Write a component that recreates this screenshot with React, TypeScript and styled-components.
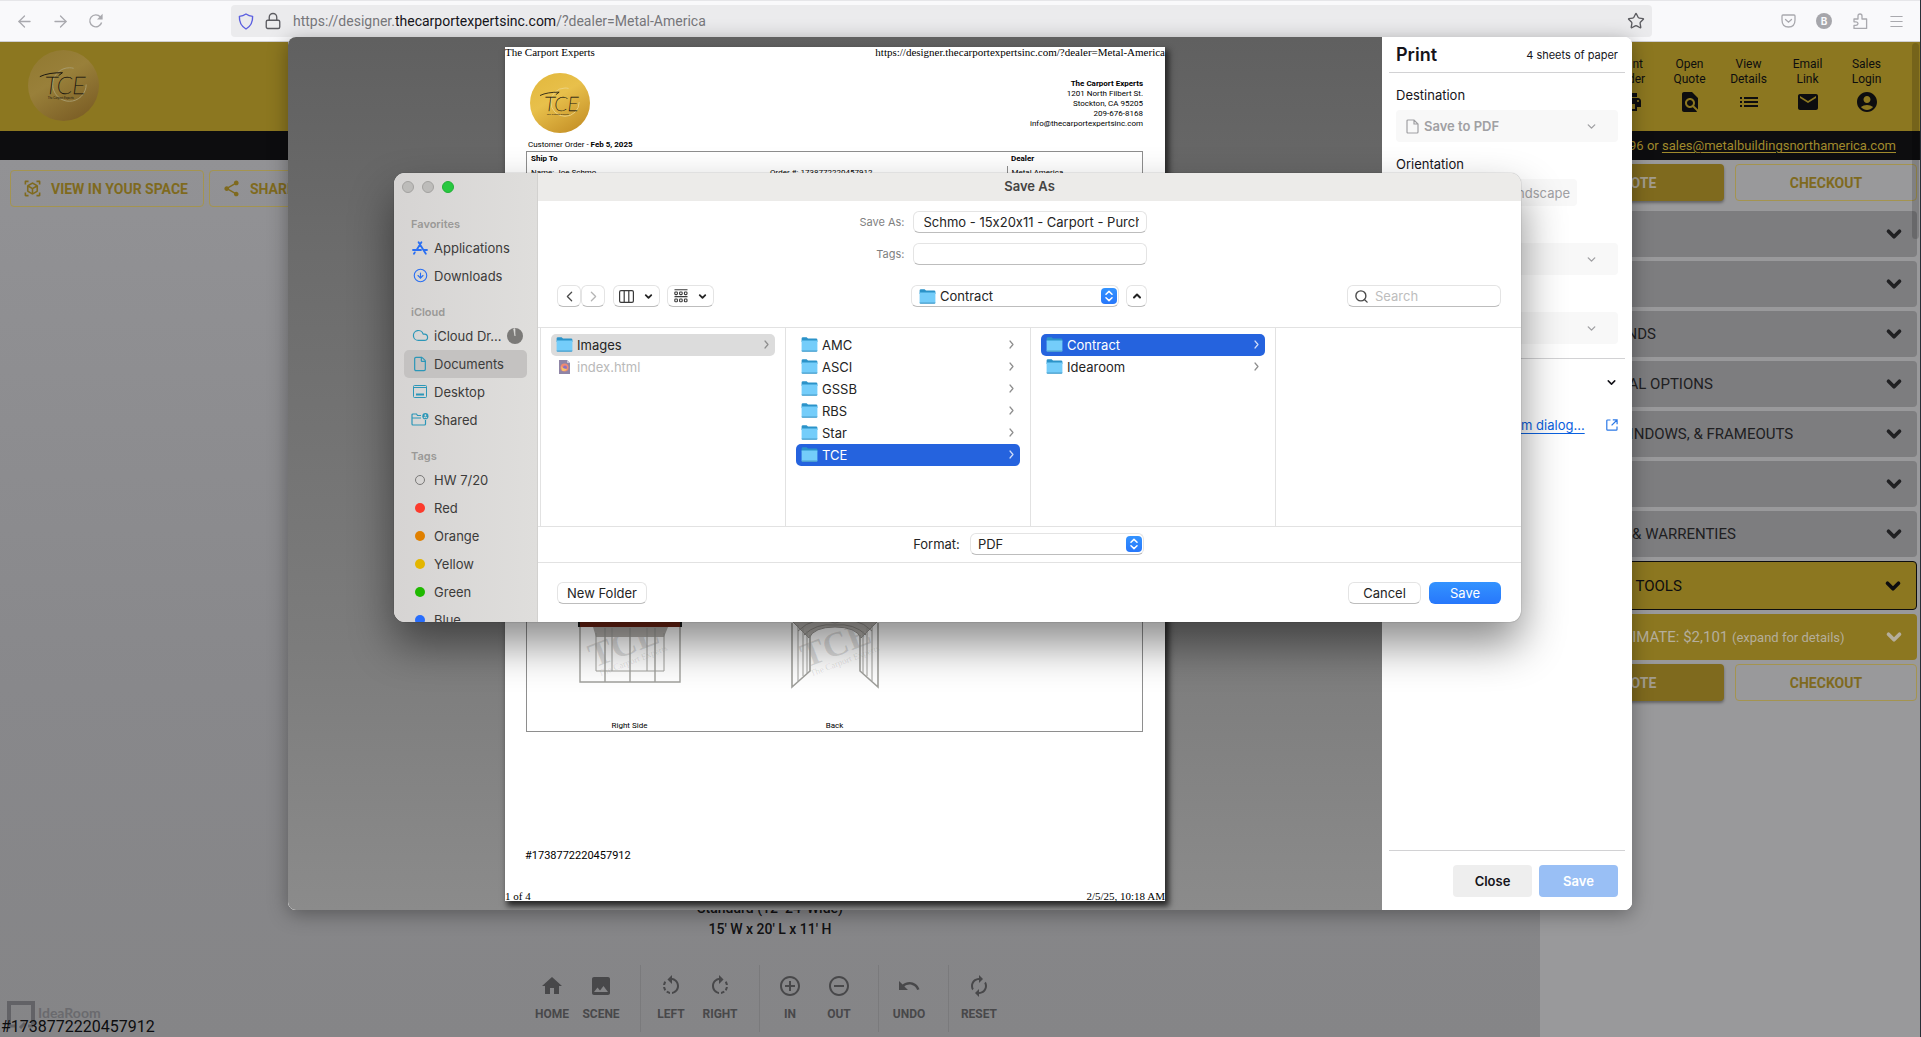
import React from "react";
import styled, { createGlobalStyle, css } from "styled-components";
import {
  MdAccountCircle,
  MdAutorenew,
  MdControlPoint,
  MdEmail,
  MdFindInPage,
  MdHome,
  MdImage,
  MdList,
  MdPrint,
  MdRemoveCircleOutline,
  MdRotateLeft,
  MdRotateRight,
  MdShare,
  MdUndo,
  MdViewInAr,
} from "react-icons/md";
import {
  ArrowLeft,
  ArrowRight,
  ChevronDown,
  ChevronLeft,
  ChevronRight,
  ChevronUp,
  CircleArrowDown,
  Cloud,
  File as FileIcon,
  Lock,
  Menu,
  Search,
  Star,
} from "lucide-react";

const sans = `Inter, "Liberation Sans", sans-serif`;
const roboto = `Roboto, "Liberation Sans", sans-serif`;
const serif = `"Liberation Serif", "Times New Roman", serif`;

const Global = createGlobalStyle`
  *, *::before, *::after { box-sizing: border-box; }
  body { margin: 0; overflow: hidden; background: #99999b; }
  button, input, select { font: inherit; color: inherit; margin: 0; }
  button { cursor: pointer; }
  ul { list-style: none; margin: 0; padding: 0; }
  h1, h2, h3, p { margin: 0; font: inherit; }
  svg { display: block; flex: none; }
`;

/* ---------- Browser chrome ---------- */

const Screen = styled.div`
  position: relative;
  height: 100vh;
  display: flex;
  flex-direction: column;
  overflow: hidden;
  font-family: ${roboto};
  border-right: 1px solid #2a3038;
`;

const BrowserBar = styled.div`
  display: flex;
  align-items: center;
  flex: none;
  height: 42px;
  padding-left: 14px;
  background: #f9f9fb;
  border-top: 1px solid #e6e6e9;
  border-bottom: 1px solid #cfcfd2;
  color: #a9a9ae;
`;

const NavButtons = styled.div`
  display: flex;
  gap: 16px;
  width: 217px;
`;

const ChromeButton = styled.button`
  display: grid;
  place-items: center;
  width: 20px;
  height: 20px;
  padding: 0;
  border: 0;
  background: none;
`;

const AddressBar = styled.div`
  display: flex;
  align-items: center;
  flex: 1;
  height: 32px;
  padding: 0 7px;
  gap: 10px;
  border-radius: 4px;
  background: #ebebed;
  color: #5c5c61;
`;

const Address = styled.div`
  flex: 1;
  margin-left: 1px;
  font: 400 14px/20px ${roboto};
  color: #77777b;
  b {
    font-weight: 400;
    color: #15141a;
  }
`;

const Extensions = styled.div`
  display: flex;
  gap: 16px;
  padding: 0 14px 0 126px;
`;

const ProfileBadge = styled.span`
  display: grid;
  place-items: center;
  width: 16px;
  height: 16px;
  border-radius: 50%;
  background: #a6a6ab;
  color: #f9f9fb;
  font: 700 10px/16px ${sans};
`;

/* ---------- Dimmed page ---------- */

const SiteHeader = styled.header`
  display: flex;
  align-items: flex-start;
  justify-content: space-between;
  flex: none;
  height: 89px;
  padding: 8px 24px 0 28px;
  background: #8c7720;
  color: #0d0d0f;
`;

const HeaderLinks = styled.nav`
  display: flex;
  padding-top: 7px;
`;

const HeaderLink = styled.button`
  display: flex;
  flex-direction: column;
  align-items: center;
  gap: 3px;
  width: 59px;
  padding: 0;
  border: 0;
  background: none;
  font: 400 12px/15px ${roboto};
`;

const ContactBar = styled.div`
  flex: none;
  height: 29px;
  padding-right: 24px;
  background: #0d0d0f;
  color: #a08a2c;
  text-align: right;
  font: 400 13px/29px ${roboto};
  a {
    color: inherit;
    text-underline-offset: 2px;
  }
`;

const Workspace = styled.div`
  display: flex;
  flex: 1;
  min-height: 0;
`;

const Canvas = styled.main`
  position: relative;
  display: flex;
  flex: 1;
  flex-direction: column;
  justify-content: space-between;
  padding: 10px 0 5px;
  background: linear-gradient(#929295, #88888b 60%, #858587);
`;

const CanvasActions = styled.div`
  display: flex;
  gap: 5px;
  padding-left: 10px;
`;

const OutlineButton = styled.button<{ $grow?: boolean }>`
  display: flex;
  align-items: center;
  justify-content: center;
  gap: 9px;
  height: 37px;
  padding: 0 15px 0 12px;
  border: 1px solid #a49450;
  border-radius: 4px;
  background: none;
  color: #7f6a1e;
  font: 700 14px/20px ${roboto};
  ${(p) => p.$grow && css`flex: 1; padding: 0;`}
`;

const QuoteButton = styled(OutlineButton)`
  border: 0;
  background: #7f6a1e;
  color: #a29c8e;
  box-shadow: 0 2px 3px rgba(0, 0, 0, 0.35);
`;

const CanvasFooter = styled.div`
  display: flex;
  flex-direction: column;
  align-items: center;
`;

const Caption = styled.p`
  padding-bottom: 25px;
  color: #111113;
  text-align: center;
  font: 500 14px/21px ${roboto};
`;

const ToolGroups = styled.div`
  display: flex;
`;

const ToolGroup = styled.div`
  display: flex;
  padding: 0 14px 0 6px;
  border-right: 1px solid #7a7a7c;
  &:last-child {
    border-color: transparent;
  }
`;

const Tool = styled.button`
  display: flex;
  flex-direction: column;
  align-items: center;
  gap: 8px;
  width: 49px;
  padding: 9px 0 10px;
  border: 0;
  background: none;
  color: #48484a;
  font: 700 12px/16px ${roboto};
`;

const Brand = styled.div`
  position: absolute;
  left: 7px;
  bottom: 8px;
  display: flex;
  gap: 3px;
  color: #6a6a6e;
  font: 700 14px/24px Lato, sans-serif;
`;

const QuoteNumber = styled.p`
  position: absolute;
  left: 1px;
  bottom: 0;
  color: #0d0d0f;
  font: 400 16px/20px ${roboto};
`;

const Options = styled.aside`
  display: flex;
  flex: none;
  flex-direction: column;
  gap: 4px;
  width: 380px;
  padding: 4px 3px 0 4px;
  background: #99999b;
`;

const ButtonPair = styled.div<{ $spaced?: boolean }>`
  display: flex;
  gap: 11px;
  padding-bottom: ${(p) => (p.$spaced ? 6 : 0)}px;
`;

const Accordion = styled.button<{ $tone?: "active" | "total" }>`
  display: flex;
  align-items: center;
  gap: 6px;
  height: 46px;
  padding: 0 12px 0 17px;
  border: 0;
  border-radius: 4px;
  background: #7d7d7f;
  color: #202022;
  text-align: left;
  font: 400 15px/20px ${roboto};
  span {
    flex: 1;
  }
  small {
    font-size: 13px;
  }
  ${(p) =>
    p.$tone === "active" &&
    css`
      height: 49px;
      border: 1px solid #0d0d0f;
      background: #8c7720;
      color: #0d0d0f;
    `}
  ${(p) =>
    p.$tone === "total" &&
    css`
      background: #8c7720;
      color: #b5ae9b;
    `}
`;

const ScrollThumb = styled.div`
  position: absolute;
  top: 43px;
  right: 1px;
  width: 7px;
  height: 196px;
  border-radius: 4px;
  background: rgba(0, 0, 0, 0.16);
`;

/* ---------- Print dialog ---------- */

const PrintDialog = styled.section`
  position: absolute;
  top: 37px;
  left: 15%;
  width: 70%;
  display: flex;
  overflow: hidden;
  border-radius: 8px;
  background: #fff;
`;

const PrintShade = styled(PrintDialog).attrs({ as: "div" })`
  height: 873px;
  box-shadow: 0 4px 20px rgba(0, 0, 0, 0.35);
`;

const Preview = styled.div`
  display: flex;
  flex: 1;
  justify-content: center;
  padding: 10px 0 9px;
  background: linear-gradient(#606060, #6c6c6c 25%, #7c7c7c 70%, #8b8b8b);
`;

const Paper = styled.article`
  display: flex;
  flex-direction: column;
  width: 660px;
  min-height: 854px;
  background: #fff;
  color: #000;
  box-shadow: 3px 4px 6px 1px #262626;
  font: 400 8px/10px ${roboto};
`;

const PaperEdge = styled.div`
  display: flex;
  justify-content: space-between;
  font: 400 11px/10px ${serif};
`;

const Letterhead = styled.div`
  display: flex;
  justify-content: space-between;
  padding: 16px 22px 0 25px;
`;

const Company = styled.address`
  padding-top: 6px;
  text-align: right;
  font-style: normal;
`;

const OrderLine = styled.p`
  padding: 7px 23px 1px;
`;

const OrderBox = styled.div`
  display: flex;
  flex-direction: column;
  justify-content: space-between;
  height: 581px;
  margin: 0 22px 0 21px;
  border: 1px solid #8e8e8e;
`;

const OrderTable = styled.table`
  width: 100%;
  border-collapse: collapse;
  table-layout: fixed;
  text-align: left;
  th,
  td {
    padding: 2px 4px;
    font-weight: 400;
  }
  th {
    font-weight: 700;
  }
  td + td + td {
    border-left: 1px solid #8e8e8e;
  }
`;

const Views = styled.div`
  display: flex;
`;

const View = styled.figure`
  display: flex;
  flex-direction: column;
  align-items: center;
  gap: 30px;
  width: 205px;
  margin: 0;
`;

const PaperNumber = styled.p`
  flex: 1;
  padding: 117px 20px 0;
  font: 400 11px/14px ${roboto};
`;

const Settings = styled.form`
  display: flex;
  flex: none;
  flex-direction: column;
  width: 250px;
  padding: 0 7px;
  background: #fff;
  color: #15141a;
  font: 400 13px/18px ${sans};
`;

const SettingsHead = styled.div`
  display: flex;
  align-items: center;
  justify-content: space-between;
  height: 36px;
  padding: 0 7px;
  border-bottom: 1px solid #d2d2d4;
  h2 {
    font: 600 18px/24px ${sans};
  }
  span {
    font-size: 11px;
  }
`;

const Section = styled.div`
  display: flex;
  flex-direction: column;
  gap: 6px;
  padding: 13px 7px 0;
`;

const PickBox = styled.div`
  display: flex;
  align-items: center;
  gap: 5px;
  height: 32px;
  padding: 0 20px 0 10px;
  border-radius: 4px;
  background: #f8f8f8;
  color: #a0a0a3;
`;

const BareSelect = styled.select`
  flex: 1;
  min-width: 0;
  padding: 0;
  border: 0;
  outline: 0;
  appearance: none;
  background: none;
  opacity: 1;
`;

const BoldSelect = styled(BareSelect)`
  font-weight: 600;
`;

const RadioRow = styled.div`
  display: flex;
  width: 181px;
  height: 27px;
`;

const Orientation = styled.label`
  display: grid;
  place-items: center end;
  flex: 1;
  padding-right: 7px;
  border-radius: 4px;
  background: #f8f8f8;
  color: #a0a0a3;
  input {
    position: absolute;
    appearance: none;
    width: 0;
    height: 0;
    margin: 0;
  }
`;

const MoreRow = styled.button`
  display: flex;
  align-items: center;
  justify-content: space-between;
  height: 48px;
  margin-top: 14px;
  padding: 0 7px;
  border: 0;
  border-top: 1px solid #d2d2d4;
  background: none;
`;

const SystemRow = styled.div`
  display: flex;
  align-items: center;
  justify-content: space-between;
  flex: none;
  padding: 10px 7px;
  color: #0a61e0;
  a {
    color: inherit;
    text-underline-offset: 3px;
  }
`;

const SettingsFoot = styled.div`
  display: flex;
  justify-content: flex-end;
  gap: 7px;
  margin-top: auto;
  padding: 14px 7px 13px;
  border-top: 1px solid #d2d2d4;
`;

const PrintButton = styled.button<{ $primary?: boolean }>`
  width: 79px;
  height: 32px;
  border: 0;
  border-radius: 4px;
  background: ${(p) => (p.$primary ? "#99bff5" : "#eeeeee")};
  color: ${(p) => (p.$primary ? "#fff" : "#15141a")};
  font: 600 13px/18px ${sans};
`;

/* ---------- Save dialog ---------- */

const SaveDialog = styled.section`
  position: absolute;
  top: 173px;
  left: calc(50% - 566px);
  display: flex;
  width: 1127px;
  height: 449px;
  overflow: hidden;
  border-radius: 11px;
  background: #fff;
  color: #242424;
  font: 400 13px/16px ${sans};
  box-shadow: 0 0 1px rgba(0, 0, 0, 0.6), 0 22px 44px rgba(0, 0, 0, 0.46);
`;

const Sidebar = styled.nav`
  flex: none;
  width: 144px;
  padding: 8px 10px 0;
  border-right: 1px solid #d2d1cf;
  background: linear-gradient(90deg, #d6d4d3, #dfdedc);
  color: #3c3b3a;
`;

const Lights = styled.div`
  display: flex;
  gap: 8px;
  height: 21px;
  margin-left: -2px;
`;

const Light = styled.button<{ $on?: boolean }>`
  width: 12px;
  height: 12px;
  padding: 0;
  border: 1px solid ${(p) => (p.$on ? "#20b035" : "#a3a2a0")};
  border-radius: 50%;
  background: ${(p) => (p.$on ? "#28c840" : "#bdbcba")};
`;

const GroupTitle = styled.h3`
  height: 32px;
  padding: 14px 7px 0;
  color: #9a9997;
  font: 600 11px/17px ${sans};
`;

const Place = styled.button<{ $active?: boolean }>`
  display: flex;
  align-items: center;
  gap: 5px;
  width: 100%;
  height: 28px;
  padding: 0 7px 1px;
  border: 0;
  border-radius: 5px;
  background: ${(p) => (p.$active ? "#c4c2c1" : "none")};
  text-align: left;
  white-space: nowrap;
`;

const PlaceIcon = styled.span`
  display: grid;
  place-items: center;
  flex: none;
  width: 18px;
`;

const PlaceName = styled.span`
  flex: 1;
`;

const Dot = styled.span<{ $color?: string }>`
  width: 10px;
  height: 10px;
  border-radius: 50%;
  background: ${(p) => p.$color ?? "none"};
  border: ${(p) => (p.$color ? "0" : "1px solid #7a7978")};
`;

const Pane = styled.div`
  display: flex;
  flex: 1;
  flex-direction: column;
  min-width: 0;
`;

const TitleBar = styled.h2`
  height: 28px;
  background: #ecebe9;
  color: #454443;
  text-align: center;
  font: 600 13px/27px ${sans};
`;

const NameForm = styled.form`
  display: grid;
  grid-template-columns: 1fr 234px 1fr;
  gap: 10px 8px;
  align-items: center;
  padding-top: 10px;
  label {
    color: #7f7f7f;
    text-align: right;
    font-size: 11px;
  }
`;

const control = css`
  height: 22px;
  border: 1px solid #e4e4e4;
  border-bottom-color: #bdbdbd;
  border-radius: 6px;
  background: #fff;
`;

const Field = styled.input`
  ${control}
  grid-column: 2;
  min-width: 0;
  padding: 0 7px 0 10px;
  outline: 0;
  font-feature-settings: "calt" 0;
`;

const Toolbar = styled.div`
  display: grid;
  grid-template-columns: 1fr auto 1fr;
  padding: 20px 20px 20px 19px;
`;

const ToolbarGroup = styled.div<{ $end?: boolean }>`
  display: flex;
  gap: 7px;
  justify-content: ${(p) => (p.$end ? "flex-end" : "flex-start")};
`;

const NavPair = styled.div`
  display: flex;
  padding-right: 1px;
`;

const MacButton = styled.button<{ $width?: number; $primary?: boolean }>`
  ${control}
  display: flex;
  align-items: center;
  justify-content: center;
  gap: 9px;
  width: ${(p) => p.$width ?? 24}px;
  padding: 0;
  ${(p) =>
    p.$primary &&
    css`
      border: 0;
      background: linear-gradient(#3393ff, #2777fb);
      color: #fff;
    `}
`;

const MacPick = styled.div<{ $width: number }>`
  ${control}
  display: flex;
  align-items: center;
  gap: 4px;
  width: ${(p) => p.$width}px;
  padding: 0 1px 0 7px;
`;

const Stepper = styled.span`
  display: grid;
  place-items: center;
  width: 16px;
  height: 16px;
  border-radius: 4px;
  background: linear-gradient(#3393ff, #2777fb);
`;

const SearchBox = styled.label`
  ${control}
  display: flex;
  align-items: center;
  gap: 6px;
  width: 154px;
  padding: 0 6px;
  input {
    flex: 1;
    min-width: 0;
    padding: 0;
    border: 0;
    outline: 0;
    background: none;
  }
  input::placeholder {
    color: #bdbdbd;
  }
`;

const ColumnsWrap = styled.div`
  border-top: 1px solid #e2e2e2;
  border-bottom: 1px solid #e2e2e2;
`;

const Columns = styled.div`
  display: flex;
  height: 198px;
  margin-left: 2px;
  border-left: 1px solid #e2e2e2;
`;

const Column = styled.ul`
  flex: none;
  width: 245px;
  padding: 6px 10px 0;
  border-right: 1px solid #e2e2e2;
`;

const Entry = styled.button<{ $state?: "selected" | "path" | "disabled" }>`
  display: flex;
  align-items: center;
  gap: 4px;
  width: 100%;
  height: 22px;
  padding: 0 3px 1px 5px;
  border: 0;
  border-radius: 5px;
  background: none;
  text-align: left;
  span {
    flex: 1;
  }
  ${(p) => p.$state === "selected" && css`background: #2563de; color: #fff;`}
  ${(p) => p.$state === "path" && css`background: #dcdcdc;`}
  ${(p) => p.$state === "disabled" && css`color: #b9b9b9;`}
`;

const FormatRow = styled.div`
  display: flex;
  align-items: center;
  justify-content: center;
  gap: 10px;
  height: 35px;
  padding: 0 2px 2px 0;
`;

const SaveFoot = styled.div`
  display: flex;
  align-items: center;
  gap: 8px;
  flex: 1;
  padding: 0 20px 0 19px;
  border-top: 1px solid #e2e2e2;
`;

const Spacer = styled.span`
  flex: 1;
`;

/* ---------- Drawings ---------- */

const Logo = ({ size, dim }: { size: number; dim?: boolean }) => {
  const id = dim ? "gold-dim" : "gold";
  return (
    <svg width={size} height={size} viewBox="0 0 72 72" aria-label="TCE The Carport Experts">
      <defs>
        <linearGradient id={id} x1="0.2" y1="0" x2="0.8" y2="1">
          <stop offset="0" stopColor={dim ? "#927a32" : "#e3b93f"} />
          <stop offset="0.4" stopColor={dim ? "#99803a" : "#e8c04b"} />
          <stop offset="1" stopColor={dim ? "#7a5c24" : "#c48f26"} />
        </linearGradient>
      </defs>
      <circle cx="36" cy="36" r="36" fill={`url(#${id})`} />
      <circle cx="42" cy="35" r="17" fill="none" stroke={dim ? "#a89a6c" : "#ecd58a"} strokeWidth="1" strokeDasharray="84 23" />
      <path d="M12 27 C18 24 26 23 35 23 L31 26" fill="none" stroke="#1a1710" strokeWidth="1" />
      <text x="17" y="45" fontFamily="Lato" fontStyle="italic" fontWeight="100" fontSize="25" fill="#1a1710" stroke="#1a1710" strokeWidth="0.4">
        TCE
      </text>
      <text x="20" y="50" fontFamily="Lato" fontSize="3" fill="#1a1710">
        The Carport Experts
      </text>
    </svg>
  );
};

const Folder = () => (
  <svg width="17" height="17" viewBox="0 0 17 17">
    <path d="M0.6 2.6 Q0.6 1.2 2 1.2 H5.6 L7 2.4 H15 Q16.4 2.4 16.4 3.8 V6 H0.6Z" fill="#2b93c9" />
    <path d="M0.6 4.4 H16.4 V14.4 Q16.4 15.6 15.2 15.6 H1.8 Q0.6 15.6 0.6 14.4Z" fill="#74cdfa" />
    <path d="M0.6 14.4 H16.4 Q16.4 15.8 15.2 15.8 H1.8 Q0.6 15.8 0.6 14.4Z" fill="#4a9fcb" />
  </svg>
);

const StepArrows = () => (
  <svg width="8" height="12" viewBox="0 0 8 12" fill="none" stroke="#fff" strokeWidth="1.5" strokeLinecap="round" strokeLinejoin="round">
    <path d="M1 4.2 L4 1.4 L7 4.2 M1 7.8 L4 10.6 L7 7.8" />
  </svg>
);

const Disclosure = ({ color }: { color: string }) => (
  <svg width="11" height="11" viewBox="0 0 11 11" fill="none" stroke={color} strokeWidth="1.2" strokeLinecap="round" strokeLinejoin="round">
    <path d="M4 2 L7 5.5 L4 9" />
  </svg>
);

const AppsIcon = () => (
  <svg width="16" height="14" viewBox="0 0 16 14" fill="none" stroke="#2a6ff2" strokeWidth="1.8" strokeLinecap="round">
    <path d="M9.4 1.2 L4.6 9 M6.6 1.2 L13.8 12.8 M1 9 H9 M12 9 H15 M2.8 11.4 L2 12.8" />
  </svg>
);

const DesktopIcon = () => (
  <svg width="14" height="13" viewBox="0 0 14 13" fill="none" stroke="#2c97b8">
    <rect x="0.5" y="0.5" width="13" height="12" rx="1" />
    <path d="M1 2.5 H13" />
    <path d="M3 9.5 H11" strokeWidth="2" />
  </svg>
);

const SharedIcon = () => (
  <svg width="18" height="13" viewBox="0 0 18 13" fill="none" stroke="#2c97b8" strokeWidth="1.2">
    <path d="M10 2.5 H6.5 L5.5 1 H2 Q1 1 1 2 V11 Q1 12 2 12 H13.5 Q14.5 12 14.5 11 V7 M1 5 H10" />
    <circle cx="14.4" cy="3.2" r="3.1" fill="#2c97b8" stroke="none" />
    <circle cx="14.4" cy="2.2" r="0.9" fill="#d9d8d6" stroke="none" />
    <path d="M13 4.8 Q14.4 3.2 15.8 4.8" stroke="#d9d8d6" />
  </svg>
);

const SyncPie = () => (
  <svg width="16" height="16" viewBox="0 0 16 16">
    <circle cx="8" cy="8" r="8" fill="#7b7a78" />
    <path d="M8 8 L6.6 1 L8 0.6Z" fill="#dcdbd9" stroke="#dcdbd9" strokeWidth="0.6" />
  </svg>
);

const ColumnsIcon = () => (
  <svg width="15" height="13" viewBox="0 0 15 13" fill="none" stroke="#3a3a3a" strokeWidth="1.2">
    <rect x="0.6" y="0.6" width="13.8" height="11.8" rx="1.4" />
    <path d="M5.2 1 V12 M9.8 1 V12" />
  </svg>
);

const GroupIcon = () => (
  <svg width="14" height="14" viewBox="0 0 14 14" fill="none" stroke="#3a3a3a" strokeWidth="1.1">
    <path d="M0.5 0.8 H13.5 M0.5 7.6 H13.5" />
    {[0.8, 5.6, 10.4].map((x) => (
      <React.Fragment key={x}>
        <rect x={x} y="3" width="2.6" height="2.6" rx="0.8" />
        <rect x={x} y="10" width="2.6" height="2.8" rx="0.8" />
      </React.Fragment>
    ))}
  </svg>
);

const HtmlIcon = () => (
  <svg width="17" height="16" viewBox="0 0 17 16">
    <path d="M3 1 H11 L14 4 V15 H3Z" fill="#8f85a6" />
    <path d="M11 1 L14 4 H11Z" fill="#c9c3d6" />
    <circle cx="8.5" cy="8.6" r="4" fill="#f08a72" />
    <circle cx="9" cy="8.4" r="1.9" fill="#8b6fc4" />
    <path d="M5 7 Q7 10 11 10 Q9 13 6 11.4Z" fill="#f7c469" />
  </svg>
);

const PageIcon = () => (
  <svg width="13" height="15" viewBox="0 0 13 15" fill="none" stroke="#a0a0a3" strokeWidth="1.2">
    <path d="M1 2 Q1 1 2 1 H8 L12 5 V13 Q12 14 11 14 H2 Q1 14 1 13Z M8 1 V5 H12" />
  </svg>
);

const ExternalIcon = () => (
  <svg width="12" height="12" viewBox="0 0 12 12" fill="none" stroke="#2b78e6" strokeWidth="1.2">
    <path d="M4.5 1 H1.6 Q0.8 1 0.8 1.8 V10.4 Q0.8 11.2 1.6 11.2 H10.2 Q11 11.2 11 10.4 V7.5 M6.8 0.9 H11.1 V5.2 M11 1 L5.6 6.4" />
  </svg>
);

const ReloadIcon = () => (
  <svg width="16" height="16" viewBox="0 0 16 16" fill="none" stroke="#a9a9ae" strokeWidth="1.4">
    <path d="M13.6 9.5 A6 6 0 1 1 12.4 4" />
    <path d="M14.6 0.8 V6.4 H9Z" fill="#a9a9ae" stroke="none" />
  </svg>
);

const ShieldIcon = () => (
  <svg width="16" height="17" viewBox="0 0 16 17" fill="none" stroke="#5b5fe0" strokeWidth="1.4" strokeLinejoin="round">
    <path d="M8 1 Q11 3 14.6 3.4 Q15 12 8 16 Q1 12 1.4 3.4 Q5 3 8 1Z" />
  </svg>
);

const PocketIcon = () => (
  <svg width="15" height="14" viewBox="0 0 15 14" fill="none" stroke="#a9a9ae" strokeWidth="1.3" strokeLinecap="round">
    <path d="M2 1 H13 Q14 1 14 2 V6 Q14 13 7.5 13 Q1 13 1 6 V2 Q1 1 2 1Z M4.5 5.5 L7.5 8.2 L10.5 5.5" />
  </svg>
);

const PuzzleIcon = () => (
  <svg width="15" height="17" viewBox="0 0 15 17" fill="none" stroke="#a9a9ae" strokeWidth="1.3" strokeLinejoin="round">
    <path d="M1 6 H5 V3 Q5 1 7 1 Q9 1 9 3 V6 H13.6 V15.4 H1 V12.4 H3 Q5 12.2 5 10.6 Q5 9 3 8.8 H1Z" />
  </svg>
);

const Watermark = () => (
  <g transform="translate(16 47) rotate(-21)" fill="rgba(0, 0, 0, 0.12)" stroke="none" fontFamily="Liberation Serif">
    <text x="0" y="0" fontSize="35" fontWeight="700">TCE</text>
    <text x="2" y="10" fontSize="9">The Carport Experts</text>
  </g>
);

const SideView = () => (
  <svg width="104" height="70" viewBox="0 0 104 70" fill="none" stroke="#a0a09c" overflow="visible">
    <Watermark />
    <path d="M15 6 H90 L86 16 H18Z" fill="#b5b2ae" stroke="none" />
    <path d="M2 6 V61 H102 V6 M27 7 V61 M52 7 V61 M77 7 V61" strokeWidth="1.4" />
    <path d="M18 12 V50 H86 V12 M34 7 V50 M69 7 V50" />
    <rect x="1" y="0" width="102" height="6" fill="#6e2413" stroke="none" />
    <path d="M1 0 V6 M103 0 V6" stroke="#1a1a1a" strokeWidth="2" />
  </svg>
);

const BackView = () => (
  <svg width="90" height="70" viewBox="0 0 90 70" fill="none" stroke="#a0a09c" overflow="visible">
    <Watermark />
    <path d="M2 0 H88 L71 17 Q66 6 45 6 Q24 6 19 17Z" fill="#b5b2ae" stroke="#96938f" />
    <path d="M8 10 Q24 -6 45 2 Q66 -6 82 10 M14 14 Q26 2 45 4 Q64 2 76 14" stroke="#8e8b87" />
    <path d="M2 2 V66 L20 50 V14 M88 2 V66 L70 50 V14" strokeWidth="1.6" />
    <path d="M8 4 V60 M13 7 V55 M17 10 V52 M82 4 V60 M77 7 V55 M73 10 V52" />
  </svg>
);

/* ---------- Data ---------- */

const headerLinks = [
  { top: "Print", bottom: "Order", Icon: MdPrint },
  { top: "Open", bottom: "Quote", Icon: MdFindInPage },
  { top: "View", bottom: "Details", Icon: MdList },
  { top: "Email", bottom: "Link", Icon: MdEmail },
  { top: "Sales", bottom: "Login", Icon: MdAccountCircle },
];

const toolGroups = [
  [{ name: "HOME", Icon: MdHome }, { name: "SCENE", Icon: MdImage }],
  [{ name: "LEFT", Icon: MdRotateLeft }, { name: "RIGHT", Icon: MdRotateRight }],
  [{ name: "IN", Icon: MdControlPoint }, { name: "OUT", Icon: MdRemoveCircleOutline }],
  [{ name: "UNDO", Icon: MdUndo }],
  [{ name: "RESET", Icon: MdAutorenew }],
];

const optionRows = [
  "STYLE",
  "SIZE",
  "SIDES & ENDS",
  "ADDITIONAL OPTIONS",
  "DOORS, WINDOWS, & FRAMEOUTS",
  "COLORS",
  "SERVICES & WARRENTIES",
];

const teal = "#2c97b8";

const places = [
  {
    title: "Favorites",
    items: [
      { name: "Applications", icon: <AppsIcon /> },
      { name: "Downloads", icon: <CircleArrowDown size={15} color="#2a6ff2" strokeWidth={1.8} /> },
    ],
  },
  {
    title: "iCloud",
    items: [
      { name: "iCloud Dr...", icon: <Cloud size={17} color={teal} strokeWidth={1.7} />, sync: true },
      { name: "Documents", icon: <FileIcon size={16} color={teal} strokeWidth={1.8} />, active: true },
      { name: "Desktop", icon: <DesktopIcon /> },
      { name: "Shared", icon: <SharedIcon /> },
    ],
  },
  {
    title: "Tags",
    items: [
      { name: "HW 7/20", icon: <Dot /> },
      { name: "Red", icon: <Dot $color="#fc3b2d" /> },
      { name: "Orange", icon: <Dot $color="#e08000" /> },
      { name: "Yellow", icon: <Dot $color="#e3b600" /> },
      { name: "Green", icon: <Dot $color="#1fb900" /> },
      { name: "Blue", icon: <Dot $color="#286dfb" /> },
    ],
  },
];

type EntryState = "selected" | "path" | "disabled";

const columns: { name: string; state?: EntryState }[][] = [
  [{ name: "Images", state: "path" }, { name: "index.html", state: "disabled" }],
  [{ name: "AMC" }, { name: "ASCI" }, { name: "GSSB" }, { name: "RBS" }, { name: "Star" }, { name: "TCE", state: "selected" }],
  [{ name: "Contract", state: "selected" }, { name: "Idearoom" }],
];

/* ---------- Views ---------- */

const Browser = () => (
  <BrowserBar>
    <NavButtons>
      <ChromeButton aria-label="Back"><ArrowLeft size={19} strokeWidth={1.6} /></ChromeButton>
      <ChromeButton aria-label="Forward"><ArrowRight size={19} strokeWidth={1.6} /></ChromeButton>
      <ChromeButton aria-label="Reload"><ReloadIcon /></ChromeButton>
    </NavButtons>
    <AddressBar>
      <ShieldIcon />
      <Lock size={18} strokeWidth={1.8} />
      <Address>
        https://designer.<b>thecarportexpertsinc.com</b>/?dealer=Metal-America
      </Address>
      <Star size={18} strokeWidth={1.8} />
    </AddressBar>
    <Extensions>
      <ChromeButton aria-label="Pocket"><PocketIcon /></ChromeButton>
      <ChromeButton aria-label="Profile"><ProfileBadge>B</ProfileBadge></ChromeButton>
      <ChromeButton aria-label="Extensions"><PuzzleIcon /></ChromeButton>
      <ChromeButton aria-label="Menu"><Menu size={17} strokeWidth={1.6} /></ChromeButton>
    </Extensions>
  </BrowserBar>
);

const QuoteButtons = ({ spaced }: { spaced?: boolean }) => (
  <ButtonPair $spaced={spaced}>
    <QuoteButton $grow>QUOTE</QuoteButton>
    <OutlineButton $grow>CHECKOUT</OutlineButton>
  </ButtonPair>
);

const DesignerPage = () => (
  <>
    <SiteHeader>
      <Logo size={71} dim />
      <HeaderLinks>
        {headerLinks.map(({ top, bottom, Icon }) => (
          <HeaderLink key={bottom}>
            <span>{top}<br />{bottom}</span>
            <Icon size={24} />
          </HeaderLink>
        ))}
      </HeaderLinks>
    </SiteHeader>
    <ContactBar>
      Questions? 209-676-8196 or <a href="#mail">sales@metalbuildingsnorthamerica.com</a>
    </ContactBar>
    <Workspace>
      <Canvas>
        <CanvasActions>
          <OutlineButton><MdViewInAr size={19} />VIEW IN YOUR SPACE</OutlineButton>
          <OutlineButton><MdShare size={19} />SHARE</OutlineButton>
        </CanvasActions>
        <CanvasFooter>
          <Caption>Standard (12'-24' Wide)<br />15' W x 20' L x 11' H</Caption>
          <ToolGroups>
            {toolGroups.map((group) => (
              <ToolGroup key={group[0].name}>
                {group.map(({ name, Icon }) => (
                  <Tool key={name}><Icon size={24} />{name}</Tool>
                ))}
              </ToolGroup>
            ))}
          </ToolGroups>
        </CanvasFooter>
        <Brand>
          <svg width="28" height="28" viewBox="0 0 28 28" fill="none" stroke="#626266" strokeWidth="4">
            <path d="M2 24 V2 H26 V24" />
            <path d="M2 25 H8 M13 27 L18 22 M21 25 H26" strokeWidth="3" />
          </svg>
          IdeaRoom
        </Brand>
        <QuoteNumber>#1738772220457912</QuoteNumber>
      </Canvas>
      <Options>
        <QuoteButtons spaced />
        {optionRows.map((name) => (
          <Accordion key={name}><span>{name}</span><ChevronDown size={22} strokeWidth={4} /></Accordion>
        ))}
        <Accordion $tone="active"><span>DESIGNER TOOLS</span><ChevronDown size={22} strokeWidth={4} /></Accordion>
        <Accordion $tone="total">
          <span>PRICE ESTIMATE: $2,101 <small>(expand for details)</small></span>
          <ChevronDown size={22} strokeWidth={4} />
        </Accordion>
        <QuoteButtons />
      </Options>
    </Workspace>
    <ScrollThumb />
  </>
);

const PrintPreview = () => (
  <Preview>
    <Paper>
      <PaperEdge>
        <span>The Carport Experts</span>
        <span>https://designer.thecarportexpertsinc.com/?dealer=Metal-America</span>
      </PaperEdge>
      <Letterhead>
        <Logo size={60} />
        <Company>
          <b>The Carport Experts</b><br />
          1201 North Filbert St.<br />
          Stockton, CA 95205<br />
          209-676-8168<br />
          info@thecarportexpertsinc.com
        </Company>
      </Letterhead>
      <OrderLine>Customer Order - <b>Feb 5, 2025</b></OrderLine>
      <OrderBox>
        <OrderTable>
          <colgroup><col width="239" /><col width="241" /><col /></colgroup>
          <thead>
            <tr><th>Ship To</th><th /><th>Dealer</th></tr>
          </thead>
          <tbody>
            <tr><td>Name: Joe Schmo</td><td>Order #: 1738772220457912</td><td>Metal America</td></tr>
          </tbody>
        </OrderTable>
        <Views>
          <View><SideView /><figcaption>Right Side</figcaption></View>
          <View><BackView /><figcaption>Back</figcaption></View>
        </Views>
      </OrderBox>
      <PaperNumber>#1738772220457912</PaperNumber>
      <PaperEdge>
        <span>1 of 4</span>
        <span>2/5/25, 10:18 AM</span>
      </PaperEdge>
    </Paper>
  </Preview>
);

const PrintSettings = () => (
  <Settings onSubmit={(e) => e.preventDefault()}>
    <SettingsHead><h2>Print</h2><span>4 sheets of paper</span></SettingsHead>
    <Section>
      <label htmlFor="destination">Destination</label>
      <PickBox>
        <PageIcon />
        <BoldSelect id="destination" disabled><option>Save to PDF</option></BoldSelect>
        <ChevronDown size={13} strokeWidth={2.5} />
      </PickBox>
    </Section>
    <Section role="radiogroup" aria-labelledby="orientation">
      <span id="orientation">Orientation</span>
      <RadioRow>
        <Orientation><input type="radio" name="orientation" defaultChecked disabled />Portrait</Orientation>
        <Orientation><input type="radio" name="orientation" disabled />Landscape</Orientation>
      </RadioRow>
    </Section>
    <Section>
      <label htmlFor="pages">Pages</label>
      <PickBox>
        <BareSelect id="pages" disabled><option>All</option></BareSelect>
        <ChevronDown size={13} strokeWidth={2.5} />
      </PickBox>
    </Section>
    <Section>
      <label htmlFor="color">Color mode</label>
      <PickBox>
        <BareSelect id="color" disabled><option>Color</option></BareSelect>
        <ChevronDown size={13} strokeWidth={2.5} />
      </PickBox>
    </Section>
    <MoreRow type="button">More settings<ChevronDown size={13} strokeWidth={2.8} /></MoreRow>
    <SystemRow><a href="#system">Print using the system dialog...</a><ExternalIcon /></SystemRow>
    <SettingsFoot>
      <PrintButton type="button">Close</PrintButton>
      <PrintButton $primary>Save</PrintButton>
    </SettingsFoot>
  </Settings>
);

const SaveAs = () => (
  <SaveDialog role="dialog" aria-labelledby="save-title">
    <Sidebar>
      <Lights>
        <Light aria-label="Close" />
        <Light aria-label="Minimize" />
        <Light aria-label="Zoom" $on />
      </Lights>
      {places.map((group) => (
        <div key={group.title}>
          <GroupTitle>{group.title}</GroupTitle>
          {group.items.map((item: any) => (
            <Place key={item.name} $active={item.active}>
              <PlaceIcon>{item.icon}</PlaceIcon>
              <PlaceName>{item.name}</PlaceName>
              {item.sync && <SyncPie />}
            </Place>
          ))}
        </div>
      ))}
    </Sidebar>
    <Pane>
      <TitleBar id="save-title">Save As</TitleBar>
      <NameForm onSubmit={(e) => e.preventDefault()}>
        <label htmlFor="file-name">Save As:</label>
        <Field id="file-name" defaultValue="Schmo - 15x20x11 - Carport - Purchase" />
        <span />
        <label htmlFor="tags">Tags:</label>
        <Field id="tags" />
      </NameForm>
      <Toolbar>
        <ToolbarGroup>
          <NavPair>
            <MacButton aria-label="Back"><ChevronLeft size={17} strokeWidth={1.8} color="#4a4a4a" /></MacButton>
            <MacButton aria-label="Forward"><ChevronRight size={17} strokeWidth={1.8} color="#b5b5b5" /></MacButton>
          </NavPair>
          <MacButton $width={47} aria-label="Column view"><ColumnsIcon /><ChevronDown size={11} strokeWidth={4} /></MacButton>
          <MacButton $width={47} aria-label="Group items"><GroupIcon /><ChevronDown size={11} strokeWidth={4} /></MacButton>
        </ToolbarGroup>
        <ToolbarGroup>
          <MacPick $width={208}>
            <Folder />
            <BareSelect aria-label="Location"><option>Contract</option></BareSelect>
            <Stepper><StepArrows /></Stepper>
          </MacPick>
          <MacButton $width={21} aria-label="Collapse"><ChevronUp size={12} strokeWidth={4} /></MacButton>
        </ToolbarGroup>
        <ToolbarGroup $end>
          <SearchBox>
            <Search size={15} strokeWidth={2.2} color="#4a4a4a" />
            <input placeholder="Search" aria-label="Search" />
          </SearchBox>
        </ToolbarGroup>
      </Toolbar>
      <ColumnsWrap>
        <Columns>
          {columns.map((entries, i) => (
            <Column key={i}>
              {entries.map(({ name, state }) => (
                <li key={name}>
                  <Entry $state={state}>
                    {state === "disabled" ? <HtmlIcon /> : <Folder />}
                    <span>{name}</span>
                    {state !== "disabled" && <Disclosure color={state === "selected" ? "#cfdcf8" : "#8e8e8e"} />}
                  </Entry>
                </li>
              ))}
            </Column>
          ))}
        </Columns>
      </ColumnsWrap>
      <FormatRow>
        <label htmlFor="format">Format:</label>
        <MacPick $width={174}>
          <BareSelect id="format"><option>PDF</option></BareSelect>
          <Stepper><StepArrows /></Stepper>
        </MacPick>
      </FormatRow>
      <SaveFoot>
        <MacButton $width={90}>New Folder</MacButton>
        <Spacer />
        <MacButton $width={73}>Cancel</MacButton>
        <MacButton $width={72} $primary>Save</MacButton>
      </SaveFoot>
    </Pane>
  </SaveDialog>
);

export default function App() {
  return (
    <Screen>
      <Global />
      <Browser />
      <DesignerPage />
      <PrintShade />
      <PrintDialog aria-label="Print">
        <PrintPreview />
        <PrintSettings />
      </PrintDialog>
      <SaveAs />
    </Screen>
  );
}
